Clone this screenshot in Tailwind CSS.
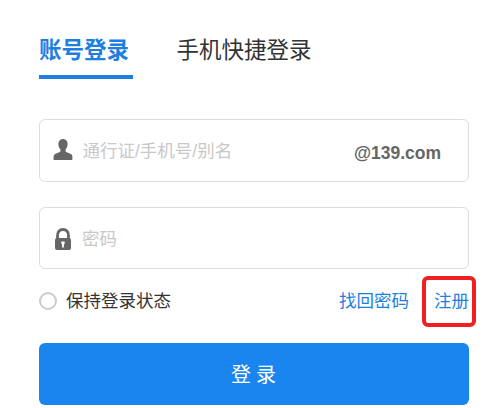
<!DOCTYPE html>
<html lang="zh-CN">
<head>
    <meta charset="UTF-8">
    <title>登录</title>
    <script src="https://cdn.jsdelivr.net/npm/@tailwindcss/browser@4"></script>
</head>
<body class="bg-white font-['Liberation_Sans','Noto_Sans_CJK_SC',sans-serif] overflow-hidden">
    <div class="w-[485px] h-[408px] pl-[39px] pr-[16px] pt-[36px]">
        <!-- Tabs -->
        <div class="flex gap-[44px] h-[43px]">
            <div class="w-[94px] h-[43px] border-b-4 border-[#1f7fe0] text-[22.5px] leading-[30px] font-bold text-[#1f7fe0] whitespace-nowrap">账号登录</div>
            <div class="-ml-[0.5px] text-[22.5px] leading-[30px] text-[#333333]">手机快捷登录</div>
        </div>

        <!-- Account -->
        <div class="mt-[40px] h-[63px] border border-[#dddddd] rounded-md flex items-center pl-[13px] pr-[27px]">
            <svg class="w-[20px] h-[21px] mb-[3px]" viewBox="0 0 20 21">
                <path fill="#666666" d="M10 0c2.800 0 4.600 2.200 4.600 5.200 0 2.300-.9 4.200-2.100 5.400v1.500c0 .9 1.200 1.300 3 2 2 .8 3.900 1.500 3.900 3.500v2.400c0 .6-.4 1-1 1H.6v-3.400c0-2 1.900-2.700 3.900-3.500 1.800-.7 3-1.100 3-2v-1.500C6.300 9.400 5.400 7.500 5.400 5.200 5.400 2.200 7.200 0 10 0z"/>
            </svg>
            <span class="ml-[9.5px] mt-[2px] text-[17.5px] text-[#c8c8c8]">通行证/手机号/别名</span>
            <span class="ml-auto mt-[5px] text-[17.500px] font-bold text-[#666666]">@139.com</span>
        </div>

        <!-- Password -->
        <div class="mt-[25px] h-[62px] border border-[#dddddd] rounded-md flex items-center pl-[14px]">
            <svg class="w-[18px] h-[22px] mt-[1px]" viewBox="0 0 18 22">
                <path fill="none" stroke="#666666" stroke-width="2.800" d="M3.500 11V7.500C3.500 3.700 5.800 1.500 9 1.500s5.500 2.200 5.500 6V11"/>
                <rect x="1" y="10" width="16" height="12" rx="2" fill="#666666"/>
                <path fill="#ffffff" d="M7.300 13.500h3.400v2l-.8 1v3H8.100v-3l-.8-1z"/>
            </svg>
            <span class="ml-[10px] mt-[3px] text-[17.5px] text-[#c8c8c8]">密码</span>
        </div>

        <!-- Options -->
        <div class="mt-[20px] h-[24px] flex items-center text-[17.5px]">
            <span class="w-[18px] h-[18px] rounded-full border-2 border-[#cccccc]"></span>
            <span class="ml-[9px] text-[#333333]">保持登录状态</span>
            <a class="ml-auto text-[#1f7fe0]">找回密码</a>
            <a class="relative ml-[25px] text-[#1f7fe0]">注册
                <span class="absolute left-[-12px] top-[-12px] w-[54px] h-[51px] border-[4px] border-[#f02020] rounded-md"></span>
            </a>
        </div>

        <!-- Submit -->
        <button class="mt-[30px] w-full h-[62px] rounded-md bg-[#1a85ee] text-white text-[20px] tracking-[5px] pl-[4px] pt-[1px]">登录</button>
    </div>
</body>
</html>
